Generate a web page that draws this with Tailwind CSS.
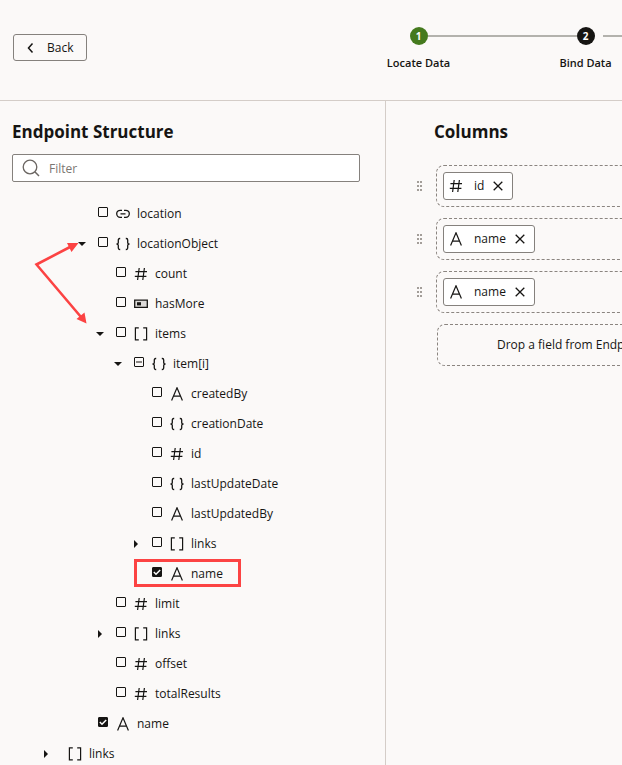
<!DOCTYPE html>
<html lang="en">
<head>
<meta charset="utf-8">
<meta name="viewport" content="width=device-width, initial-scale=1">
<title>Bind Data</title>
<script src="https://cdn.jsdelivr.net/npm/@tailwindcss/browser@4"></script>
</head>
<body class="flex h-screen flex-col overflow-hidden bg-[#fbf9f8] font-['Open_Sans','Noto_Sans',sans-serif] text-[12px] leading-4 text-[#161513]">
<svg class="hidden" aria-hidden="true">
  <symbol id="hash" viewBox="0 0 14 14"><path d="M5.2 1 3.6 13M10.4 1 8.8 13M1.4 4.6H13M.8 9.4H12.4" fill="none" stroke="currentColor" stroke-width="1.2"/></symbol>
  <symbol id="text" viewBox="0 0 14 14"><path d="M1.6 13.6 7 .8 12.4 13.6M3.5 9.2H10.5" fill="none" stroke="currentColor" stroke-width="1.2"/></symbol>
  <symbol id="object" viewBox="0 0 14 14"><path d="M4.2 1.5H3.7Q2.3 1.5 2.3 3V5.4Q2.3 7 .5 7 2.3 7 2.3 8.6V11Q2.3 12.5 3.7 12.5H4.2M9.8 1.5H10.3Q11.7 1.5 11.7 3V5.4Q11.7 7 13.5 7 11.7 7 11.7 8.6V11Q11.7 12.5 10.3 12.5H9.8" fill="none" stroke="currentColor" stroke-width="1.3"/></symbol>
  <symbol id="array" viewBox="0 0 14 14"><path d="M4.8 .8H1.4V12.8H4.8M9.2 .8H12.6V12.8H9.2" fill="none" stroke="currentColor" stroke-width="1.2"/></symbol>
  <symbol id="link" viewBox="0 0 14 14"><path d="M6 3.3H4.200A3.500 3.500 0 0 0 4.200 10.300H6M8 3.300H9.800A3.500 3.500 0 0 1 9.800 10.300H8M4.500 6.800H9.500" fill="none" stroke="currentColor" stroke-width="1.300"/></symbol>
  <symbol id="bool" viewBox="0 0 14 14"><path d="M.7 3.200H13.300V10.400H.7Z" fill="#dcdad8" stroke="currentColor" stroke-width="1.300"/><path d="M3 5.200H7V8.400H3Z" fill="currentColor"/></symbol>
  <symbol id="down" viewBox="0 0 8 8"><path d="M0 2H8L4 6Z" fill="currentColor"/></symbol>
  <symbol id="right" viewBox="0 0 8 8"><path d="M2 0 6 4 2 8Z" fill="currentColor"/></symbol>
  <symbol id="grip" viewBox="0 0 5 11"><path d="M0 0H2V2H0ZM3 0H5V2H3ZM0 4H2V6H0ZM3 4H5V6H3ZM0 8H2V10H0ZM3 8H5V10H3Z" fill="#a39e99"/></symbol>
  <symbol id="close" viewBox="0 0 10 10"><path d="M.7.7 9.3 9.3M9.3.7.7 9.3" fill="none" stroke="currentColor" stroke-width="1.3"/></symbol>
</svg>

<header class="flex h-[101px] shrink-0 items-start overflow-hidden border-b border-[#d4cdc8] pl-[13px]">
  <button type="button" class="mt-[34px] flex h-[27px] w-[74px] shrink-0 items-center rounded-[3px] border border-[#85817d] pl-3 font-medium">
    <svg class="mr-3 h-[10px] w-[9px]" viewBox="0 0 9 10" aria-hidden="true"><path d="M6.500 .6 2.500 5 6.500 9.400" fill="none" stroke="currentColor" stroke-width="1.5"/></svg>Back
  </button>
  <ol class="ml-[248px] mt-[27px] flex text-[11px] font-semibold">
    <li class="w-[167px] shrink-0 text-center">
      <div class="grid grid-cols-[1fr_18px_1fr] items-center">
        <span></span>
        <span class="flex size-[18px] items-center justify-center rounded-full bg-[#457a1e] text-[10px] font-bold text-white">1</span>
        <span class="h-[2px] bg-[#b3b2ad]"></span>
      </div>
      <p class="mt-[10px]">Locate Data</p>
    </li>
    <li class="w-[167px] shrink-0 text-center">
      <div class="grid grid-cols-[1fr_18px_1fr] items-center">
        <span class="h-[2px] bg-[#b3b2ad]"></span>
        <span class="flex size-[18px] items-center justify-center rounded-full bg-[#161513] text-[10px] font-bold text-white">2</span>
        <span class="ml-2 h-[2px] bg-[#b3b2ad]"></span>
      </div>
      <p class="mt-[10px]">Bind Data</p>
    </li>
  </ol>
</header>

<main class="flex min-h-0 flex-1">
  <section class="w-[386px] shrink-0 overflow-hidden border-r border-[#d4cdc8] pl-3 pr-[25px] pt-[19px]">
    <h2 class="text-[17px] font-bold leading-6">Endpoint Structure</h2>
    <label class="mt-[10px] flex h-7 items-center rounded-[2px] border border-[#85817d] bg-white pl-[9px]">
      <svg class="mr-[9px] size-[18px] text-[#6b6662]" viewBox="0 0 18 18" aria-hidden="true"><circle cx="8" cy="8" r="6.8" fill="none" stroke="currentColor" stroke-width="1.3"/><path d="M12.8 12.8 17 17" stroke="currentColor" stroke-width="1.5"/></svg>
      <input type="text" aria-label="Filter" placeholder="Filter" class="min-w-0 flex-1 pt-px outline-none placeholder:text-[#7b7672]">
    </label>

    <ul class="mt-[17px] pl-[25px]">
      <li>
        <ul class="pl-9">
          <li class="flex h-[30px] items-center"><span class="w-[25px]"></span><input id="c1" type="checkbox" class="mb-1 mr-2 size-[10px] appearance-none rounded-[1px] border border-[#161513]"><svg class="mr-[7px] size-[14px]"><use href="#link"/></svg><label for="c1">location</label></li>
          <li>
            <div class="flex h-[30px] items-center"><button type="button" aria-label="Collapse locationObject" class="mr-[7px] flex w-[18px] justify-center"><svg class="size-2"><use href="#down"/></svg></button><input id="c2" type="checkbox" class="mb-1 mr-2 size-[10px] appearance-none rounded-[1px] border border-[#161513]"><svg class="mr-[7px] size-[14px]"><use href="#object"/></svg><label for="c2">locationObject</label></div>
            <ul class="pl-[18px]">
              <li class="flex h-[30px] items-center"><span class="w-[25px]"></span><input id="c3" type="checkbox" class="mb-1 mr-2 size-[10px] appearance-none rounded-[1px] border border-[#161513]"><svg class="mr-[7px] size-[14px]"><use href="#hash"/></svg><label for="c3">count</label></li>
              <li class="flex h-[30px] items-center"><span class="w-[25px]"></span><input id="c4" type="checkbox" class="mb-1 mr-2 size-[10px] appearance-none rounded-[1px] border border-[#161513]"><svg class="mr-[7px] size-[14px]"><use href="#bool"/></svg><label for="c4">hasMore</label></li>
              <li>
                <div class="flex h-[30px] items-center"><button type="button" aria-label="Collapse items" class="mr-[7px] flex w-[18px] justify-center"><svg class="size-2"><use href="#down"/></svg></button><input id="c5" type="checkbox" class="mb-1 mr-2 size-[10px] appearance-none rounded-[1px] border border-[#161513]"><svg class="mr-[7px] size-[14px]"><use href="#array"/></svg><label for="c5">items</label></div>
                <ul class="pl-[18px]">
                  <li>
                    <div class="flex h-[30px] items-center"><button type="button" aria-label="Collapse item[i]" class="mr-[7px] flex w-[18px] justify-center"><svg class="size-2"><use href="#down"/></svg></button><span class="mb-1 mr-2 grid size-[10px]"><input id="c6" type="checkbox" class="col-start-1 row-start-1 size-[10px] appearance-none rounded-[1px] border border-[#161513]"><span class="pointer-events-none col-start-1 row-start-1 h-[2px] w-[6px] place-self-center bg-[#8b8885]"></span></span><svg class="mr-[7px] size-[14px]"><use href="#object"/></svg><label for="c6">item[i]</label></div>
                    <ul class="pl-[18px]">
                      <li class="flex h-[30px] items-center"><span class="w-[25px]"></span><input id="c7" type="checkbox" class="mb-1 mr-2 size-[10px] appearance-none rounded-[1px] border border-[#161513]"><svg class="mr-[7px] size-[14px]"><use href="#text"/></svg><label for="c7">createdBy</label></li>
                      <li class="flex h-[30px] items-center"><span class="w-[25px]"></span><input id="c8" type="checkbox" class="mb-1 mr-2 size-[10px] appearance-none rounded-[1px] border border-[#161513]"><svg class="mr-[7px] size-[14px]"><use href="#object"/></svg><label for="c8">creationDate</label></li>
                      <li class="flex h-[30px] items-center"><span class="w-[25px]"></span><input id="c9" type="checkbox" class="mb-1 mr-2 size-[10px] appearance-none rounded-[1px] border border-[#161513]"><svg class="mr-[7px] size-[14px]"><use href="#hash"/></svg><label for="c9">id</label></li>
                      <li class="flex h-[30px] items-center"><span class="w-[25px]"></span><input id="c10" type="checkbox" class="mb-1 mr-2 size-[10px] appearance-none rounded-[1px] border border-[#161513]"><svg class="mr-[7px] size-[14px]"><use href="#object"/></svg><label for="c10">lastUpdateDate</label></li>
                      <li class="flex h-[30px] items-center"><span class="w-[25px]"></span><input id="c11" type="checkbox" class="mb-1 mr-2 size-[10px] appearance-none rounded-[1px] border border-[#161513]"><svg class="mr-[7px] size-[14px]"><use href="#text"/></svg><label for="c11">lastUpdatedBy</label></li>
                      <li class="flex h-[30px] items-center"><button type="button" aria-label="Expand links" class="mr-[7px] flex w-[18px] justify-center"><svg class="size-2"><use href="#right"/></svg></button><input id="c12" type="checkbox" class="mb-1 mr-2 size-[10px] appearance-none rounded-[1px] border border-[#161513]"><svg class="mr-[7px] size-[14px]"><use href="#array"/></svg><label for="c12">links</label></li>
                      <li class="relative flex h-[30px] items-center"><span class="w-[25px]"></span><span class="mb-1 mr-2 grid size-[10px]"><input id="c13" type="checkbox" checked class="col-start-1 row-start-1 size-[10px] appearance-none rounded-[1px] border border-[#161513] checked:bg-[#161513]"><svg class="pointer-events-none col-start-1 row-start-1 size-[10px]" viewBox="0 0 11 11"><path d="M2 5.6 4.4 8 9 3.2" fill="none" stroke="#fff" stroke-width="1.6"/></svg></span><svg class="mr-[7px] size-[14px]"><use href="#text"/></svg><label for="c13">name</label><span class="pointer-events-none absolute left-[7px] top-0 h-7 w-[107px] border-3 border-[#fc4343]"></span></li>
                    </ul>
                  </li>
                </ul>
              </li>
              <li class="flex h-[30px] items-center"><span class="w-[25px]"></span><input id="c14" type="checkbox" class="mb-1 mr-2 size-[10px] appearance-none rounded-[1px] border border-[#161513]"><svg class="mr-[7px] size-[14px]"><use href="#hash"/></svg><label for="c14">limit</label></li>
              <li class="flex h-[30px] items-center"><button type="button" aria-label="Expand links" class="mr-[7px] flex w-[18px] justify-center"><svg class="size-2"><use href="#right"/></svg></button><input id="c15" type="checkbox" class="mb-1 mr-2 size-[10px] appearance-none rounded-[1px] border border-[#161513]"><svg class="mr-[7px] size-[14px]"><use href="#array"/></svg><label for="c15">links</label></li>
              <li class="flex h-[30px] items-center"><span class="w-[25px]"></span><input id="c16" type="checkbox" class="mb-1 mr-2 size-[10px] appearance-none rounded-[1px] border border-[#161513]"><svg class="mr-[7px] size-[14px]"><use href="#hash"/></svg><label for="c16">offset</label></li>
              <li class="flex h-[30px] items-center"><span class="w-[25px]"></span><input id="c17" type="checkbox" class="mb-1 mr-2 size-[10px] appearance-none rounded-[1px] border border-[#161513]"><svg class="mr-[7px] size-[14px]"><use href="#hash"/></svg><label for="c17">totalResults</label></li>
            </ul>
          </li>
          <li class="flex h-[30px] items-center"><span class="w-[25px]"></span><span class="mb-1 mr-2 grid size-[10px]"><input id="c18" type="checkbox" checked class="col-start-1 row-start-1 size-[10px] appearance-none rounded-[1px] border border-[#161513] checked:bg-[#161513]"><svg class="pointer-events-none col-start-1 row-start-1 size-[10px]" viewBox="0 0 11 11"><path d="M2 5.6 4.4 8 9 3.2" fill="none" stroke="#fff" stroke-width="1.6"/></svg></span><svg class="mr-[7px] size-[14px]"><use href="#text"/></svg><label for="c18">name</label></li>
        </ul>
      </li>
      <li class="flex h-[30px] items-center"><button type="button" aria-label="Expand links" class="mr-[13px] flex w-[18px] justify-center"><svg class="size-2"><use href="#right"/></svg></button><svg class="mr-[7px] size-[14px]"><use href="#array"/></svg><span>links</span></li>
    </ul>
  </section>

  <section class="min-w-0 flex-1 overflow-hidden pl-[31px] pt-[19px]">
    <h2 class="pl-[17px] text-[17px] font-bold leading-6">Columns</h2>
    <ul class="mt-[21px] flex flex-col gap-[11px]">
      <li class="flex items-center">
        <svg class="mr-[14px] h-[11px] w-[5px] shrink-0"><use href="#grip"/></svg>
        <div class="-mr-2 flex h-[42px] flex-1 items-center rounded-[8px] border border-dashed border-[#8b8580] pl-[6px]">
          <div class="flex h-7 items-center rounded-[3px] border border-[#85817d] bg-white pl-[5px] pr-[9px]"><svg class="mr-[11px] size-[14px]"><use href="#hash"/></svg>id<button type="button" aria-label="Remove id" class="ml-[9px]"><svg class="size-[10px]"><use href="#close"/></svg></button></div>
        </div>
      </li>
      <li class="flex items-center">
        <svg class="mr-[14px] h-[11px] w-[5px] shrink-0"><use href="#grip"/></svg>
        <div class="-mr-2 flex h-[42px] flex-1 items-center rounded-[8px] border border-dashed border-[#8b8580] pl-[6px]">
          <div class="flex h-7 items-center rounded-[3px] border border-[#85817d] bg-white pl-[5px] pr-[9px]"><svg class="mr-[11px] size-[14px]"><use href="#text"/></svg>name<button type="button" aria-label="Remove name" class="ml-[9px]"><svg class="size-[10px]"><use href="#close"/></svg></button></div>
        </div>
      </li>
      <li class="flex items-center">
        <svg class="mr-[14px] h-[11px] w-[5px] shrink-0"><use href="#grip"/></svg>
        <div class="-mr-2 flex h-[42px] flex-1 items-center rounded-[8px] border border-dashed border-[#8b8580] pl-[6px]">
          <div class="flex h-7 items-center rounded-[3px] border border-[#85817d] bg-white pl-[5px] pr-[9px]"><svg class="mr-[11px] size-[14px]"><use href="#text"/></svg>name<button type="button" aria-label="Remove name" class="ml-[9px]"><svg class="size-[10px]"><use href="#close"/></svg></button></div>
        </div>
      </li>
    </ul>
    <div class="-mr-2 ml-5 mt-[11px] flex h-[42px] items-center whitespace-nowrap rounded-[8px] border border-dashed border-[#8b8580] pl-[59px]">Drop a field from Endpoint Structure</div>
  </section>
</main>

<svg class="pointer-events-none absolute left-[30px] top-[235px] h-[95px] w-[65px]" viewBox="30 235 65 95" aria-hidden="true">
  <path d="M70 247 36.500 264.500 81 317" fill="none" stroke="#fc4343" stroke-width="2.600"/>
  <path d="M78.500 243 71.500 252 67 243ZM86.500 323.500 76.500 319 84.500 312.500Z" fill="#fc4343"/>
</svg>
</body>
</html>
